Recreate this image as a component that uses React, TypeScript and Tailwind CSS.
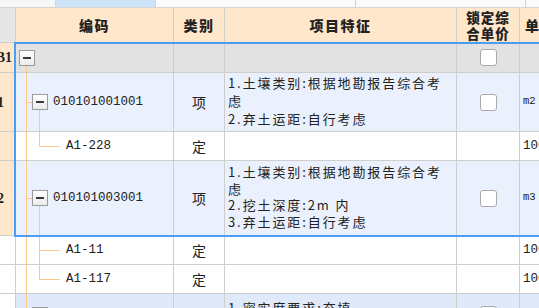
import React from 'react'

const CJK = '[font-family:"Noto_Sans_CJK_SC","Noto_Sans",sans-serif]'
const MONO = '[font-family:"Liberation_Mono","DejaVu_Sans_Mono",monospace]'
const LINE = 'bg-[#fcc98b]'

type Row = {
  h: string
  bg: string
  leftBg: string
  label?: string
  labelPad?: string
  v0: 'full' | 'bottom'
  v1?: 'full' | 'top' | 'bottom'
  box?: 0 | 1
  leaf?: boolean
  code?: string
  cat?: string
  lines?: string[]
  lead?: string
  check?: boolean
  unit?: string
  unitSmall?: boolean
}

const rows: Row[] = [
  { h: 'h-[30px]', bg: 'bg-[#e2e2e2]', leftBg: 'bg-[#ffe7cb]', label: 'B1', labelPad: 'pr-[3px]', v0: 'bottom', box: 0, check: true },
  {
    h: 'h-[59px]', bg: 'bg-[#eaf1fc]', leftBg: 'bg-[#ffe7cb]', label: '1', labelPad: 'pr-[11px]', v0: 'full', v1: 'bottom', box: 1,
    code: '010101001001', cat: '项', lines: ['1.土壤类别:根据地勘报告综合考', '虑', '2.弃土运距:自行考虑'], lead: 'leading-[18px] pt-[1px]',
    check: true, unit: 'm2', unitSmall: true,
  },
  { h: 'h-[29px]', bg: 'bg-white', leftBg: 'bg-[#ffe7cb]', v0: 'full', v1: 'top', leaf: true, code: 'A1-228', cat: '定', unit: '100' },
  {
    h: 'h-[75px]', bg: 'bg-[#eaf1fc]', leftBg: 'bg-[#ffe7cb]', label: '2', labelPad: 'pr-[11px]', v0: 'full', v1: 'bottom', box: 1,
    code: '010101003001', cat: '项', lines: ['1.土壤类别:根据地勘报告综合考', '虑', '2.挖土深度:2m 内', '3.弃土运距:自行考虑'], lead: 'leading-[16.5px] pt-[3px]',
    check: true, unit: 'm3', unitSmall: true,
  },
  { h: 'h-[29px]', bg: 'bg-white', leftBg: 'bg-white', v0: 'full', v1: 'full', leaf: true, code: 'A1-11', cat: '定', unit: '100' },
  { h: 'h-[29px]', bg: 'bg-white', leftBg: 'bg-white', v0: 'full', v1: 'top', leaf: true, code: 'A1-117', cat: '定', unit: '100' },
  {
    h: 'h-[42px]', bg: 'bg-[#dfe9f9]', leftBg: 'bg-white', v0: 'full', v1: 'bottom', box: 1, code: '010103001001', cat: '项',
    lines: ['1.密实度要求:夯填', '2.填方材料品种:'], lead: 'leading-[17px] pt-[5px]', check: true, unit: 'm3', unitSmall: true,
  },
]

function MinusBox({ left }: { left: string }) {
  return (
    <span className={`absolute ${left} top-1/2 -mt-[8px] flex h-[16px] w-[16px] items-center justify-center border border-[#9b9b9b] bg-linear-to-b from-white to-[#ececec]`}>
      <span className="h-[2px] w-[8px] bg-[#3a3a3a]" />
    </span>
  )
}

function CodeCell({ r }: { r: Row }) {
  return (
    <div className="relative h-full border-r border-[#cecece]">
      {r.v0 === 'full' && <span className={`absolute left-[10px] top-0 bottom-0 w-px ${LINE}`} />}
      {r.v0 === 'bottom' && <span className={`absolute left-[10px] top-1/2 bottom-0 w-px ${LINE}`} />}
      {r.box === 1 && <span className={`absolute left-[10px] top-1/2 h-px w-[6px] ${LINE}`} />}
      {r.v1 === 'full' && <span className={`absolute left-[23px] top-0 bottom-0 w-px ${LINE}`} />}
      {r.v1 === 'top' && <span className={`absolute left-[23px] top-0 h-1/2 w-px ${LINE}`} />}
      {r.v1 === 'bottom' && <span className={`absolute left-[23px] top-1/2 bottom-0 w-px ${LINE}`} />}
      {r.leaf && <span className={`absolute left-[23px] top-1/2 h-px w-[21px] ${LINE}`} />}
      {r.box === 0 && <MinusBox left="left-[3px]" />}
      {r.box === 1 && <MinusBox left="left-[16px]" />}
      {r.code && (
        <div className={`flex h-full items-center ${r.leaf ? 'pl-[50px]' : 'pl-[37px]'} ${MONO} text-[12.5px] text-[#222]`}>
          {r.code}
        </div>
      )}
    </div>
  )
}

function Checkbox() {
  return <span className="h-[17px] w-[17px] rounded-[3px] border border-[#a9a9a9] bg-white" />
}

export default function App() {
  const grid = 'grid grid-cols-[16px_158px_51px_232px_63px_40px]'
  return (
    <div className="h-[308px] w-[539px] overflow-hidden bg-white">
      {/* top strip */}
      <div className="flex h-[8px] border-b border-[#d4d4d4]">
        <div className="w-[56px] border-r border-[#d4d4d4] bg-[#f7f7f7]" />
        <div className="w-[100px] border-r border-[#d4d4d4] bg-[#cde4f8]" />
        <div className="w-[200px] border-r border-[#d4d4d4] bg-[#fafafa]" />
        <div className="w-[170px] border-r border-[#d4d4d4] bg-[#fafafa]" />
        <div className="flex-1 bg-[#fafafa]" />
      </div>

      {/* header */}
      <div className={`${grid} h-[35px] border-b border-[#cecece] ${CJK} text-[14px] font-black tracking-[1.5px] text-[#222]`}>
        <div className="border-r border-[#cecece] bg-[#e6e6e6]" />
        <div className="flex items-center justify-center border-r border-[#cecece] bg-[#ffe7cb]">编码</div>
        <div className="flex items-center justify-center border-r border-[#cecece] bg-[#ffe7cb]">类别</div>
        <div className="flex items-center justify-center border-r border-[#cecece] bg-[#ffe7cb]">项目特征</div>
        <div className="flex flex-col items-center justify-center border-r border-[#cecece] bg-[#ffe7cb] text-[13.5px] leading-[16px] tracking-[1px]">
          <span>锁定综</span>
          <span>合单价</span>
        </div>
        <div className="flex items-center overflow-hidden whitespace-nowrap bg-[#ffe7cb] pl-[5px]">单位</div>
      </div>

      {/* body */}
      <div className="relative">
        {rows.map((r, i) => (
          <div key={i} className={`${grid} ${r.h} border-b border-[#cecece] ${r.bg}`}>
            <div className={`flex items-center justify-end overflow-hidden whitespace-nowrap border-r border-[#cecece] ${r.leftBg} ${r.labelPad ?? ''} [font-family:"Liberation_Serif",serif] text-[14px] font-bold text-[#222]`}>
              {r.label}
            </div>
            <CodeCell r={r} />
            <div className={`flex items-center justify-center border-r border-[#cecece] ${CJK} text-[14px] text-[#222]`}>{r.cat}</div>
            <div className={`overflow-hidden whitespace-nowrap border-r border-[#cecece] pl-[3px] ${r.lead ?? ''} ${CJK} text-[13px] tracking-[1.9px] text-[#222]`}>
              {r.lines?.map((l, j) => <div key={j}>{l}</div>)}
            </div>
            <div className="flex items-center justify-center border-r border-[#cecece]">{r.check && <Checkbox />}</div>
            <div className={`flex items-center overflow-hidden whitespace-nowrap pl-[3px] ${MONO} ${r.unitSmall ? 'text-[10.5px]' : 'text-[12.5px]'} text-[#222]`}>
              {r.unit}
            </div>
          </div>
        ))}
        {/* selection frame over rows 0-3 */}
        <div className="pointer-events-none absolute left-[14px] right-[-10px] top-[-1px] h-[195px] border-2 border-[#4b9cf5]" />
      </div>
    </div>
  )
}
